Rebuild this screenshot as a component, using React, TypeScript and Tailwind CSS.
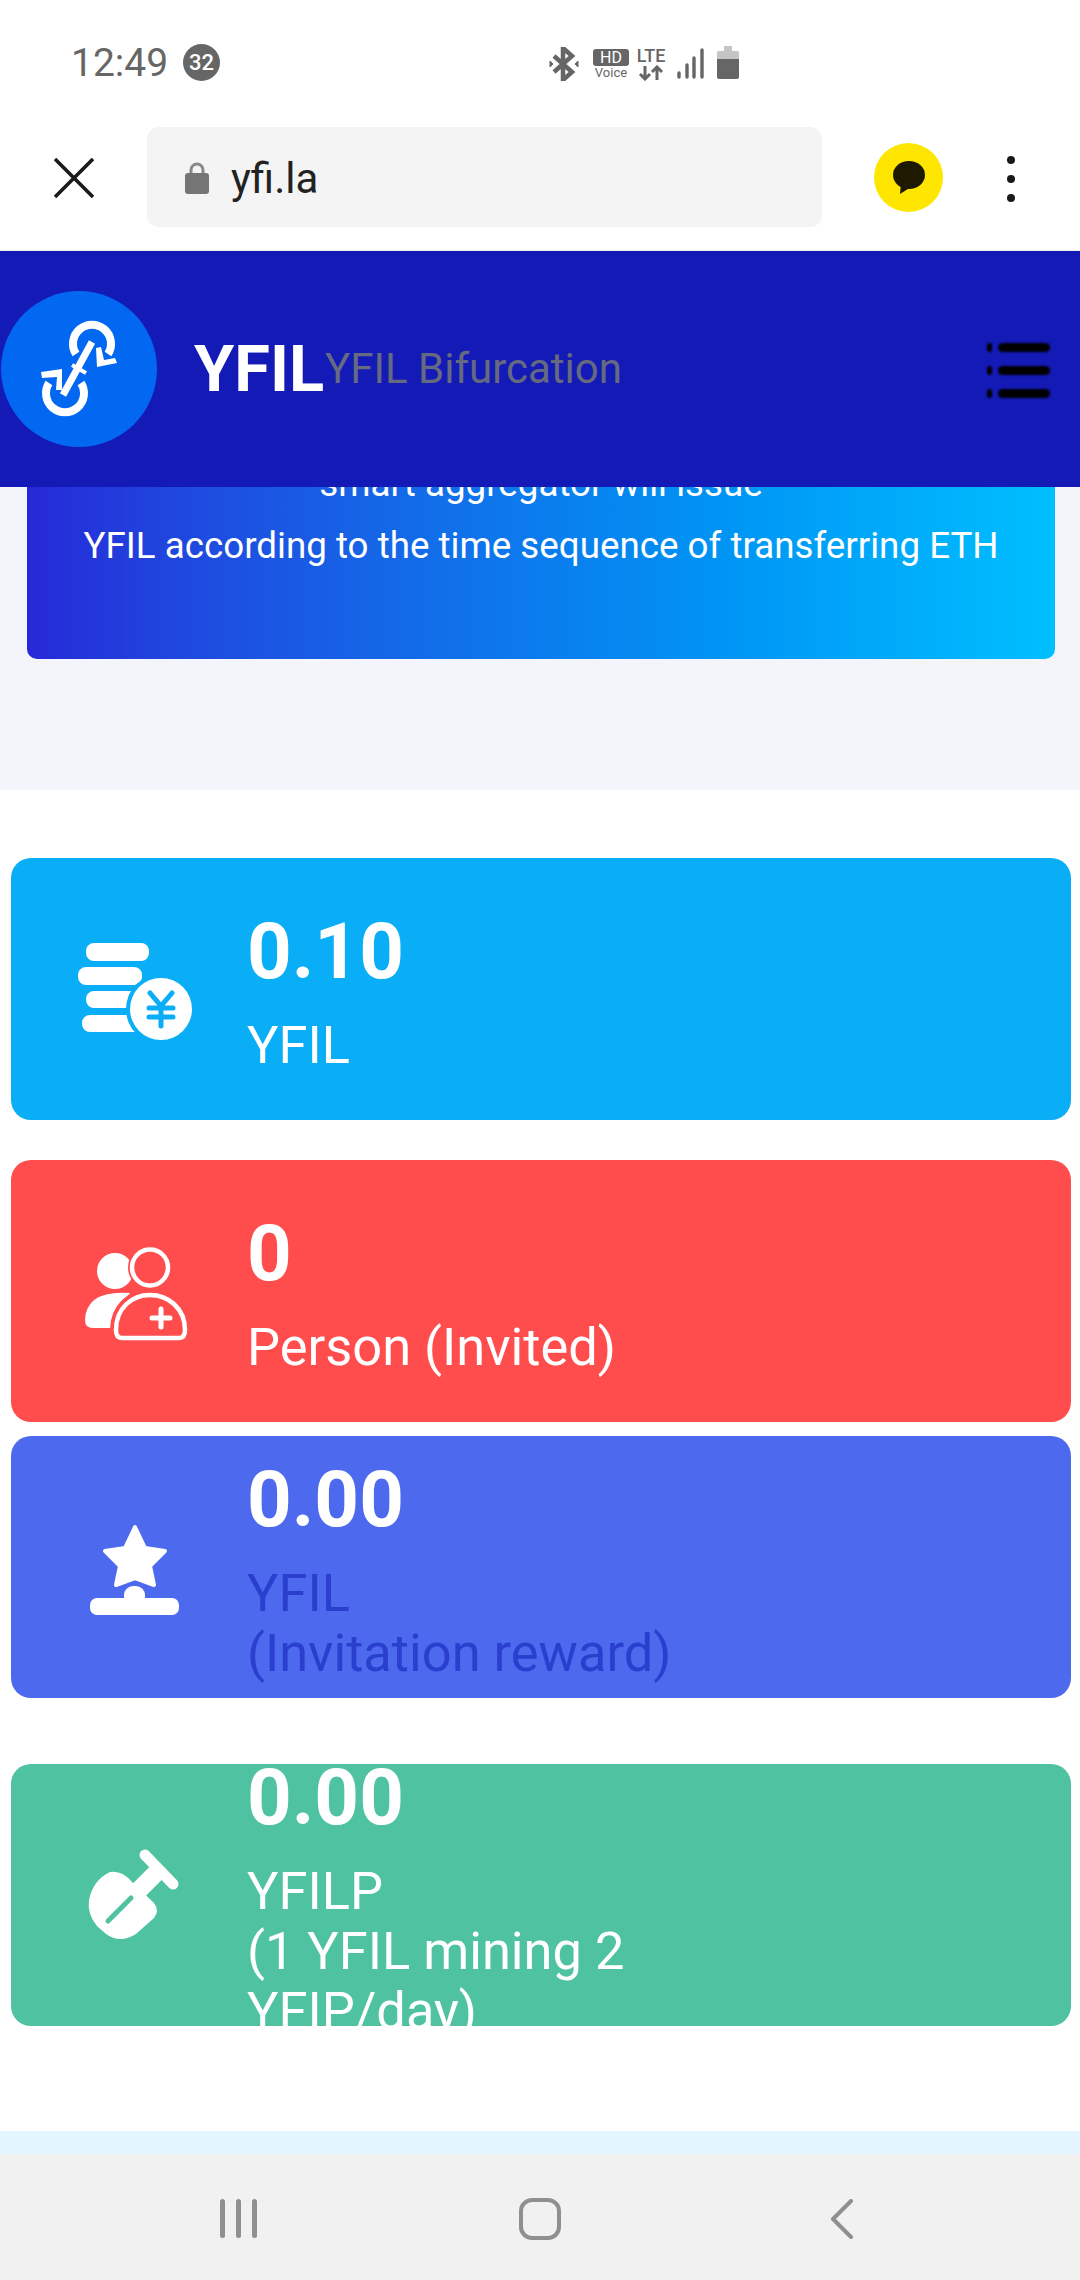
const font = "font-['Roboto',sans-serif]";

function StatusIcons() {
  return (
    <div className="flex items-start">
      <svg viewBox="0 0 30 34" className="mt-[47px] ml-[549px] h-[34px] w-[30px] text-[#666]" fill="none" stroke="currentColor">
        <path d="M5 9l18 16-9 8V1l9 8L5 25" strokeWidth="4.5" />
        <path d="M1 14v6l3-3zM29 14v6l-3-3z" fill="currentColor" strokeWidth="1" />
      </svg>
      <div className="mt-[49px] ml-[14px] flex w-[36px] flex-col items-center">
        <span className="flex h-[17px] w-[36px] items-center justify-center rounded-[3px] bg-[#666] text-[16px] leading-none text-white">HD</span>
        <span className="text-[13px] leading-[14px] text-[#666]">Voice</span>
      </div>
      <div className="mt-[46px] ml-[6px] flex w-[32px] flex-col items-center">
        <span className="text-[18px] leading-[19px] font-medium text-[#666]">LTE</span>
        <svg viewBox="0 0 32 16" className="h-[16px] w-[32px] text-[#666]" fill="none" stroke="currentColor" strokeWidth="3">
          <path d="M10 1v13M5 9l5 5 5-5M22 15V2M17 7l5-5 5 5" />
        </svg>
      </div>
      <svg viewBox="0 0 28 32" className="mt-[48px] ml-[9px] h-[32px] w-[28px] text-[#666]" fill="none" stroke="currentColor" strokeWidth="3.4" strokeLinecap="round">
        <path d="M3 25v4M11 17v12M18 10v19M26 2v27" />
      </svg>
      <svg viewBox="0 0 22 33" className="mt-[46px] ml-[13px] h-[33px] w-[22px]">
        <path d="M7 0h8v5h5a2 2 0 012 2v6H0V7a2 2 0 012-2h5z" fill="#c4c4c4" />
        <path d="M0 13h22v18a2 2 0 01-2 2H2a2 2 0 01-2-2z" fill="#666" />
      </svg>
    </div>
  );
}

function StatusBar() {
  return (
    <div className="relative flex h-[125px] bg-white">
      <span className="mt-[41px] ml-[71px] text-[39px] leading-[44px] text-[#666]">12:49</span>
      <span className="mt-[44px] ml-[15px] flex h-[37px] w-[37px] items-center justify-center rounded-full bg-[#666] text-[22px] font-medium text-white">32</span>
      <div className="absolute top-0 left-0">
        <StatusIcons />
      </div>
    </div>
  );
}

function Toolbar() {
  return (
    <div className="flex h-[126px] items-start border-b border-[#eee] bg-white">
      <svg viewBox="0 0 40 40" className="mt-[33px] ml-[54px] h-[40px] w-[40px] text-[#1a1a1a]" fill="none" stroke="currentColor" strokeWidth="3.6">
        <path d="M1 1l38 38M39 1L1 39" />
      </svg>
      <div className="mt-[2px] ml-[53px] flex h-[100px] w-[675px] items-center rounded-[12px] bg-[#f4f4f4]">
        <svg viewBox="0 0 24 33" className="ml-[38px] h-[33px] w-[24px]">
          <path d="M6 14V9a6 6 0 0112 0v5" fill="none" stroke="#888" strokeWidth="3" />
          <rect y="12" width="24" height="21" rx="3" fill="#757575" />
        </svg>
        <span className="mt-[4px] ml-[22px] text-[42px] leading-none text-[#222]">yfi.la</span>
      </div>
      <div className="mt-[18px] ml-[52px] flex h-[69px] w-[69px] items-center justify-center rounded-full bg-[#ffe600]">
        <svg viewBox="0 0 32 34" className="h-[34px] w-[32px]">
          <ellipse cx="16" cy="14" rx="16" ry="14" fill="#1e1a00" />
          <path d="M8 22l-1 11 11-7z" fill="#1e1a00" />
        </svg>
      </div>
      <div className="mt-[31px] ml-[64px] flex flex-col gap-[11px]">
        <span className="h-[8px] w-[8px] rounded-full bg-[#1a1a1a]" />
        <span className="h-[8px] w-[8px] rounded-full bg-[#1a1a1a]" />
        <span className="h-[8px] w-[8px] rounded-full bg-[#1a1a1a]" />
      </div>
    </div>
  );
}

function Logo() {
  return (
    <svg viewBox="1 11 156 156" className="h-[156px] w-[156px] shrink-0">
      <circle cx="79" cy="89" r="78" fill="#0268f2" />
      <g fill="none" stroke="#fff">
        <path d="M76 74A19 19 0 1 1 108 74" strokeWidth="8" />
        <path d="M81 103A19 19 0 1 1 49 103" strokeWidth="8" />
        <path d="M92 62L63 115" strokeWidth="7" />
        <path d="M72 85l14 8" strokeWidth="4" />
      </g>
      <path d="M97 87L117 83L115 78L104 80L101 67L96 68z" fill="#fff" />
      <path d="M41 92L62 89L62 110L56 110L57 97L42 98z" fill="#fff" />
    </svg>
  );
}

function Header() {
  return (
    <div className="flex h-[236px] items-center bg-[#141ab6] pl-[1px]">
      <Logo />
      <span className="ml-[37px] text-[65px] leading-none font-bold text-white">YFIL</span>
      <span className="mt-[-1px] ml-[1px] text-[42px] leading-none text-[#666a80]">YFIL Bifurcation</span>
      <div className="mt-[2px] mr-[30px] ml-auto flex flex-col gap-[14px] blur-[1px]">
        {[0, 1, 2].map((i) => (
          <div key={i} className="flex items-center gap-[6px]">
            <span className="h-[9px] w-[5px] rounded-full bg-black" />
            <span className="h-[9px] w-[52px] rounded-full bg-black" />
          </div>
        ))}
      </div>
    </div>
  );
}

function Banner() {
  return (
    <div className="h-[303px] bg-[#f3f5fa] pr-[25px] pl-[27px]">
      <div className="h-[172px] overflow-hidden rounded-b-[10px] bg-gradient-to-r from-[#2628d8] to-[#00bfff] text-center text-[36.75px] leading-[58px] text-white">
        <p className="mt-[-32px]">smart aggregator will issue</p>
        <p className="mt-[4px]">YFIL according to the time sequence of transferring ETH</p>
      </div>
    </div>
  );
}

function CoinsIcon() {
  return (
    <svg viewBox="35 49 120 120" className="h-[120px] w-[120px] shrink-0">
      <g fill="#fff">
        <rect x="46" y="63" width="63" height="18" rx="8" />
        <rect x="38" y="87" width="64" height="18" rx="8" />
        <rect x="46" y="111" width="60" height="17" rx="8" />
        <rect x="42" y="135" width="60" height="17" rx="8" />
      </g>
      <circle cx="121" cy="129" r="35" fill="#0aaef6" />
      <circle cx="121" cy="129" r="31" fill="#fff" />
      <path d="M110 113l11 13 11-13M121 126v20M109 128h24M109 137h24" fill="none" stroke="#0aaef6" strokeWidth="5" strokeLinecap="round" />
    </svg>
  );
}

function InviteIcon() {
  return (
    <svg viewBox="35 21 120 120" className="h-[120px] w-[120px] shrink-0">
      <circle cx="75" cy="61" r="18" fill="#fff" />
      <path d="M90 83Q46 80 45 110Q45 118 53 118L80 118Q80 95 90 83z" fill="#fff" />
      <circle cx="110" cy="57.500" r="22" fill="#ff4d4d" />
      <circle cx="110" cy="57.500" r="18" fill="none" stroke="#fff" strokeWidth="4.500" />
      <path d="M76 120C76 98 92 85 110 85S145 98 145 120C145 125 143 128 139 128H82C78 128 76 125 76 120z" fill="#ff4d4d" stroke="#ff4d4d" strokeWidth="12" />
      <path d="M76 120C76 98 92 85 110 85S145 98 145 120C145 125 143 128 139 128H82C78 128 76 125 76 120z" fill="#ff4d4d" stroke="#fff" strokeWidth="4.500" />
      <path d="M121 99v18M112 108h18" fill="none" stroke="#fff" strokeWidth="5" strokeLinecap="round" />
    </svg>
  );
}

function StarIcon() {
  return (
    <svg viewBox="35 17 120 120" className="h-[120px] w-[120px] shrink-0">
      <path d="M95 37L105 58L125 61L110 76L114 95L95 88L76 95L80 76L65 61L85 58z" fill="#fff" stroke="#fff" strokeWidth="4" strokeLinejoin="round" />
      <rect x="84" y="96" width="21" height="20" rx="9" fill="#fff" />
      <rect x="50" y="108" width="89" height="17" rx="7" fill="#fff" />
    </svg>
  );
}

function ShovelIcon() {
  return (
    <svg viewBox="35 25 120 120" className="h-[120px] w-[120px] shrink-0">
      <path d="M105 45l28 29" fill="none" stroke="#fff" strokeWidth="11" strokeLinecap="round" />
      <path d="M119 60L95 84" fill="none" stroke="#fff" strokeWidth="18" />
      <path d="M70 62Q82 60 92 72L114 93Q120 101 114 108L96 124Q80 134 66 124L57 116Q47 104 49 90Q53 70 70 62z" fill="#fff" />
      <path d="M68 111l23-23" fill="none" stroke="#4fc3a1" strokeWidth="5" strokeLinecap="round" />
    </svg>
  );
}

function StatCard({ bg, icon, value, lines, labelClass }: { bg: string; icon: React.ReactNode; value: string; lines: string[]; labelClass: string }) {
  return (
    <div className={`flex h-[262px] shrink-0 items-center overflow-hidden rounded-[20px] pl-[64px] ${bg}`}>
      {icon}
      <div className="ml-[52px] w-[460px] shrink-0 pb-[16px]">
        <div className="text-[78px] leading-[127px] font-bold text-white">{value}</div>
        {lines.map((line) => (
          <div key={line} className={`text-[52.4px] leading-[60px] ${labelClass}`}>{line}</div>
        ))}
      </div>
    </div>
  );
}

function NavBar() {
  return (
    <div className="relative flex h-[126px] items-start bg-[#f1f1f1]">
      <div className="mt-[45px] ml-[220px] flex gap-[11px]">
        <span className="h-[39px] w-[5px] rounded-full bg-[#8f8f8f]" />
        <span className="h-[39px] w-[5px] rounded-full bg-[#8f8f8f]" />
        <span className="h-[39px] w-[5px] rounded-full bg-[#8f8f8f]" />
      </div>
      <span className="mt-[44px] ml-[262px] h-[42px] w-[42px] rounded-[13px] border-[4.5px] border-[#8f8f8f]" />
      <svg viewBox="0 0 24 40" className="mt-[45px] ml-[269px] h-[40px] w-[24px] text-[#8f8f8f]" fill="none" stroke="currentColor" strokeWidth="4" strokeLinecap="round" strokeLinejoin="round">
        <path d="M21 2L3 20l18 18" />
      </svg>
    </div>
  );
}

export default function App() {
  return (
    <div className={`flex h-[2280px] w-[1080px] flex-col overflow-hidden bg-white ${font}`}>
      <StatusBar />
      <Toolbar />
      <Header />
      <Banner />
      <div className="flex flex-1 flex-col pt-[68px] pr-[9px] pl-[11px]">
        <StatCard bg="bg-[#0aaef6]" icon={<CoinsIcon />} value="0.10" lines={["YFIL"]} labelClass="text-white" />
        <div className="h-[40px] shrink-0" />
        <StatCard bg="bg-[#ff4d4d]" icon={<InviteIcon />} value="0" lines={["Person (Invited)"]} labelClass="text-white" />
        <div className="h-[14px] shrink-0" />
        <StatCard bg="bg-[#4d6aef]" icon={<StarIcon />} value="0.00" lines={["YFIL", "(Invitation reward)"]} labelClass="text-[#2a3fce]" />
        <div className="h-[66px] shrink-0" />
        <StatCard bg="bg-[#4fc3a1]" icon={<ShovelIcon />} value="0.00" lines={["YFILP", "(1 YFIL mining 2", "YFIP/day)"]} labelClass="text-white" />
      </div>
      <div className="h-[23px] shrink-0 bg-[#e3f5fe]" />
      <NavBar />
    </div>
  );
}
